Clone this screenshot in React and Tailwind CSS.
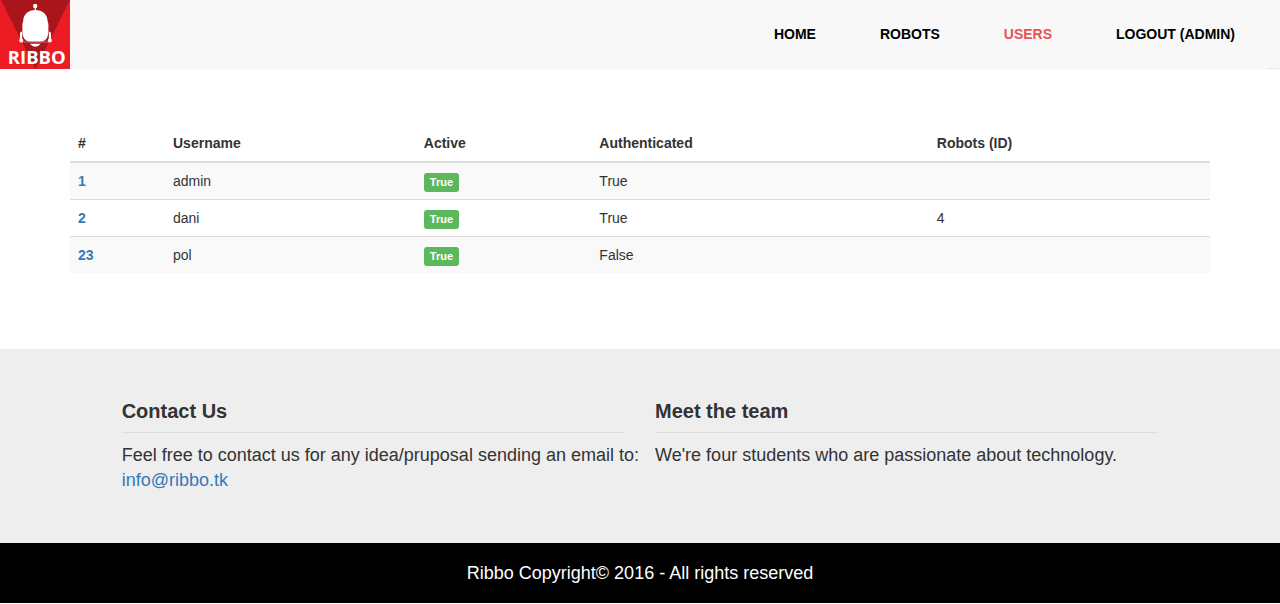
const navItems = [
  { label: 'HOME', href: '#home' },
  { label: 'ROBOTS', href: '#robots' },
  { label: 'USERS', href: '#users', active: true },
  { label: 'LOGOUT (ADMIN)', href: '#logout' },
];

const columns = [
  { title: '#', width: 'w-1/12' },
  { title: 'Username', width: 'w-[22%]' },
  { title: 'Active', width: 'w-[15.4%]' },
  { title: 'Authenticated', width: 'w-[29.6%]' },
  { title: 'Robots (ID)', width: '' },
];

const users = [
  { id: 1, name: 'admin', active: 'True', authenticated: 'True', robots: '' },
  { id: 2, name: 'dani', active: 'True', authenticated: 'True', robots: '4' },
  { id: 23, name: 'pol', active: 'True', authenticated: 'False', robots: '' },
];

function Logo() {
  return (
    <svg viewBox="0 0 70 69" className="block h-[69px] w-[70px]" role="img" aria-label="Ribbo">
      <rect width="70" height="69" fill="#ed1c24" />
      <path d="M1 0H70L35.5 69Z" fill="#a8161b" />
      <g fill="#fff">
        <circle cx="35.2" cy="6" r="2.2" />
        <path d="M34.6 7h1.2v4h-1.2z" />
        <path d="M23.2 21C23.2 14.5 28.5 10 35.4 10S47.600 14.5 47.600 21L48.400 24V32C48.400 37 45.500 41.500 41.500 41.500H29.300C25.300 41.500 22.400 37 22.400 32V24Z" />
        <path d="M20 33.500Q20.500 31.500 21.500 31.500Q22.200 31.500 22.200 33V39.200H19.900Z" />
        <path d="M51 33.500Q50.500 31.500 49.500 31.500Q48.800 31.500 48.800 33V39.200H51.100Z" />
        <circle cx="21.200" cy="40.500" r="2" />
        <circle cx="49.800" cy="40.500" r="2" />
        <path d="M30 43.800H40.600Q38.500 46.800 35.300 46.800T30 43.800Z" />
      </g>
      <path d="M22 42H49" stroke="#fff" strokeWidth="0.6" opacity="0.6" />
      <text x="36.8" y="64" textAnchor="middle" fontSize="18.500" className="fill-white font-['Open_Sans',sans-serif] font-bold">
        RIBBO
      </text>
    </svg>
  );
}

function Header() {
  return (
    <header className="flex">
      <div className="flex flex-1 items-center justify-between bg-[#f8f8f8]">
        <a href="#home">
          <Logo />
        </a>
        <nav className="mr-[31px] flex gap-16 pb-0.5 text-sm leading-5 font-bold text-black">
          {navItems.map((item) => (
            <a key={item.label} href={item.href} className={item.active ? 'text-[#e95254]' : ''}>
              {item.label}
            </a>
          ))}
        </nav>
      </div>
      <div className="w-3.5 border-b border-[#e7e7e7] bg-[#f8f8f8]" />
    </header>
  );
}

function UsersTable() {
  return (
    <table className="w-full border-collapse text-left text-sm leading-5">
      <thead>
        <tr className="border-b-2 border-[#ddd]">
          {columns.map((column) => (
            <th key={column.title} scope="col" className={`p-2 font-bold ${column.width}`}>
              {column.title}
            </th>
          ))}
        </tr>
      </thead>
      <tbody className="divide-y divide-[#ddd]">
        {users.map((user) => (
          <tr key={user.id} className="odd:bg-[#f9f9f9]">
            <th scope="row" className="p-2 font-bold">
              <a href={`#user-${user.id}`} className="text-[#337ab7]">
                {user.id}
              </a>
            </th>
            <td className="p-2">{user.name}</td>
            <td className="px-2 pt-0.5">
              <span className="block w-fit rounded-[3px] bg-[#5cb85c] px-1.5 text-[11px] leading-[19px] font-bold text-white">
                {user.active}
              </span>
            </td>
            <td className="p-2">{user.authenticated}</td>
            <td className="p-2">{user.robots}</td>
          </tr>
        ))}
      </tbody>
    </table>
  );
}

function FooterColumn({ title, children }) {
  return (
    <section>
      <h2 className="border-b border-[#ddd] pb-2.5 text-xl leading-[22px] font-bold">{title}</h2>
      <div className="pt-2.5 text-lg leading-[25px]">{children}</div>
    </section>
  );
}

export default function App() {
  return (
    <div className="bg-white font-['Liberation_Sans',Arial,sans-serif] text-[#333]">
      <Header />
      <main className="mx-auto max-w-[1170px] px-[15px] pt-14 pb-[76px]">
        <UsersTable />
      </main>
      <footer>
        <div className="bg-[#eee] pt-[51px] pb-[50px]">
          <div className="mx-auto grid w-10/12 gap-[30px] px-[15px] md:grid-cols-2">
            <FooterColumn title="Contact Us">
              <p className="xl:whitespace-nowrap">Feel free to contact us for any idea/pruposal sending an email to:</p>
              <a href="mailto:info@ribbo.tk" className="text-[#337ab7]">
                info@ribbo.tk
              </a>
            </FooterColumn>
            <FooterColumn title="Meet the team">
              <p>We're four students who are passionate about technology.</p>
            </FooterColumn>
          </div>
        </div>
        <p className="bg-black py-[17px] text-center text-lg leading-[26px] text-white">
          Ribbo Copyright© 2016 - All rights reserved
        </p>
      </footer>
    </div>
  );
}
